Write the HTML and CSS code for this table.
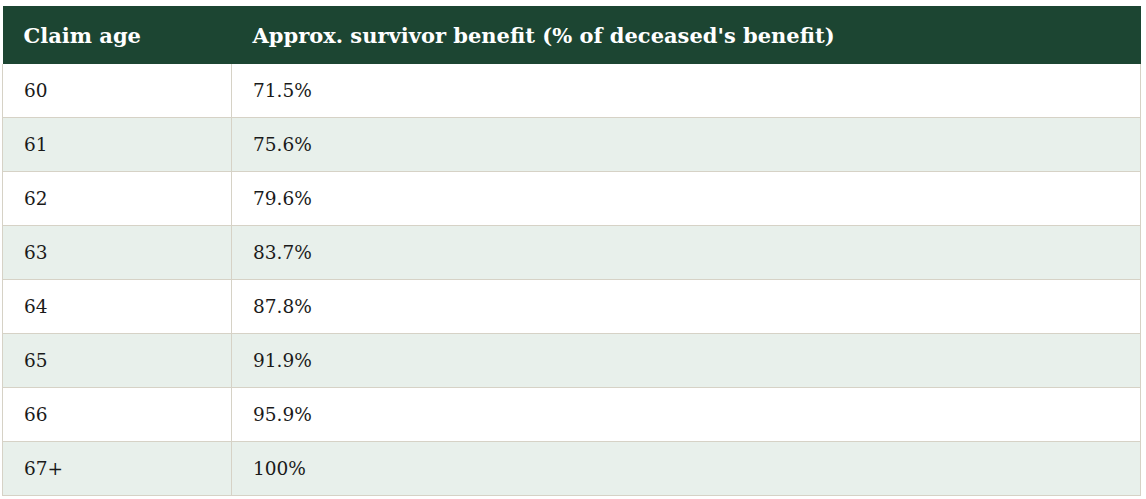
FILE: index.html
```html
<!DOCTYPE html>
<html lang="en">
<head>
<meta charset="utf-8">
<title>Survivor benefit by claim age</title>
<link rel="stylesheet" href="styles.css">
</head>
<body>
<table class="benefit-table">
  <thead>
    <tr><th class="col-age">Claim age</th><th>Approx. survivor benefit (% of deceased's benefit)</th></tr>
  </thead>
  <tbody>
    <tr><td>60</td><td>71.5%</td></tr>
    <tr><td>61</td><td>75.6%</td></tr>
    <tr><td>62</td><td>79.6%</td></tr>
    <tr><td>63</td><td>83.7%</td></tr>
    <tr><td>64</td><td>87.8%</td></tr>
    <tr><td>65</td><td>91.9%</td></tr>
    <tr><td>66</td><td>95.9%</td></tr>
    <tr><td>67+</td><td>100%</td></tr>
  </tbody>
</table>
</body>
</html>
```

FILE: styles.css
```css
html, body {
  margin: 0;
  background: #ffffff;
}
body {
  padding: 6px 5px 0 2px;
  font-family: "DejaVu Serif", Georgia, serif;
  color: #1a1a1a;
}
.benefit-table {
  width: 1139px;
  border-collapse: collapse;
  font-size: 18.5px;
}
.benefit-table th {
  background: #1c4532;
  color: #ffffff;
  font-weight: 700;
  font-size: 21px;
  text-align: left;
  height: 58px;
  padding: 0 21px;
  box-sizing: border-box;
  border: none;
}
.benefit-table .col-age {
  width: 229px;
}
.benefit-table td {
  height: 54px;
  padding: 0 21px;
  box-sizing: border-box;
  border: 1px solid #d6d2c6;
  vertical-align: middle;
}
.benefit-table thead + tbody tr:first-child td {
  border-top: none;
  height: 53px;
}
.benefit-table tbody tr:nth-child(even) td {
  background: #e8f0eb;
}
```
